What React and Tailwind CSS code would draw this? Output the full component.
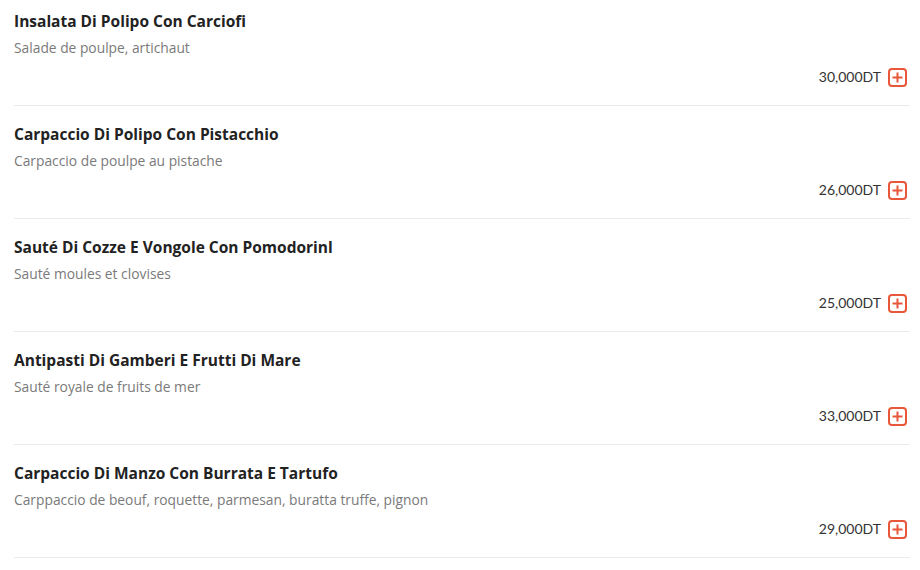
import React from "react";

const items = [
  { name: "Insalata Di Polipo Con Carciofi", desc: "Salade de poulpe, artichaut", price: "30,000DT" },
  { name: "Carpaccio Di Polipo Con Pistacchio", desc: "Carpaccio de poulpe au pistache", price: "26,000DT" },
  { name: "Sauté Di Cozze E Vongole Con Pomodorinl", desc: "Sauté moules et clovises", price: "25,000DT" },
  { name: "Antipasti Di Gamberi E Frutti Di Mare", desc: "Sauté royale de fruits de mer", price: "33,000DT" },
  { name: "Carpaccio Di Manzo Con Burrata E Tartufo", desc: "Carppaccio de beouf, roquette, parmesan, buratta truffe, pignon", price: "29,000DT" },
];

const PlusBox = () => (
  <svg width="19" height="19" viewBox="0 0 19 19" fill="none">
    <rect x="1" y="1" width="17" height="17" rx="3" stroke="#e8573a" strokeWidth="2" />
    <path d="M9.5 4.5v10M4.5 9.5h10" stroke="#e8573a" strokeWidth="2" />
  </svg>
);

const App = () => {
  return (
    <div className="w-[920px] h-[570px] overflow-hidden bg-white pl-[14px] pr-[10px] font-['Open_Sans',sans-serif]">
      {items.map((item) => (
        <div key={item.name} className="pt-[18px] first:pt-[11px] pb-[18px] border-b border-[#ebebeb] flex flex-col">
          <span className="text-[15.5px] leading-[20px] font-bold text-[#222]">{item.name}</span>
          <span className="mt-[7px] text-[13.8px] leading-[20px] text-[#7a7a7a]">{item.desc}</span>
          <div className="mt-[9px] flex items-center justify-end gap-[7px] pr-[3px] h-[20px]">
            <span className="text-[14px] leading-[20px] text-[#333] font-['Lato',sans-serif]">{item.price}</span>
            <PlusBox />
          </div>
        </div>
      ))}
    </div>
  );
};

export default App;
